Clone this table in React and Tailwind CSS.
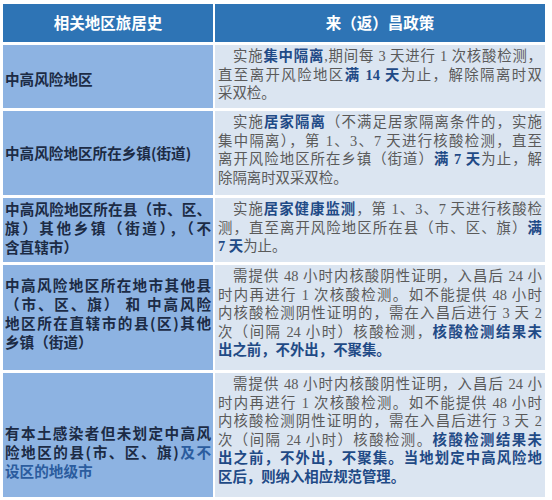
import React from 'react'

const Em = ({ children }) => <b className="font-bold text-[#1f4a86]">{children}</b>

// one printed line of a cell; every line but the last is stretched to the full width
const Line = ({ children, last, indent }) => (
  <div className={`whitespace-nowrap text-justify ${last ? '' : '[text-align-last:justify]'} ${indent ? 'pl-[15px]' : ''}`}>
    {children}
  </div>
)

const LeftCell = ({ pad, children }) => (
  <div className={`w-[210px] shrink-0 bg-[#8db3e2] px-[2px] ${pad} text-[14.6px] leading-[19px] font-bold text-[#1c2b45] font-['Noto_Sans_CJK_SC',sans-serif]`}>
    {children}
  </div>
)

const RightCell = ({ children }) => (
  <div className="w-[330px] shrink-0 bg-[#dbe5f1] pl-[3px] pr-[3px] pt-[2px] text-[14.4px] leading-[18.5px] text-[#5a5a5a] font-['Liberation_Serif','Noto_Sans_CJK_SC',serif]">
    {children}
  </div>
)

const Row = ({ h, children }) => <div className={`flex gap-[2px] ${h}`}>{children}</div>

const App = () => {
  return (
    <div className="w-[552px] h-[500px] bg-white pl-[3px] pt-[4px]">
      <div className="flex flex-col gap-[3px]">
        {/* Header */}
        <Row h="h-[38px]">
          <div className="w-[210px] shrink-0 bg-[#2e74b5] flex items-center justify-center text-white font-bold text-[15.5px] font-['Noto_Sans_CJK_SC',sans-serif]">
            相关地区旅居史
          </div>
          <div className="w-[330px] shrink-0 bg-[#2e74b5] flex items-center justify-center text-white font-bold text-[15.5px] font-['Noto_Sans_CJK_SC',sans-serif]">
            来（返）昌政策
          </div>
        </Row>

        <Row h="h-[63px]">
          <LeftCell pad="pt-[24px]">
            <Line last>中高风险地区</Line>
          </LeftCell>
          <RightCell>
            <Line indent>实施<Em>集中隔离</Em>,期间每 3 天进行 1 次核酸检测，</Line>
            <Line>直至离开风险地区<Em>满 14 天</Em>为止，解除隔离时双</Line>
            <Line last>采双检。</Line>
          </RightCell>
        </Row>

        <Row h="h-[84px]">
          <LeftCell pad="pt-[32px]">
            <Line last>中高风险地区所在乡镇(街道)</Line>
          </LeftCell>
          <RightCell>
            <Line indent>实施<Em>居家隔离</Em>（不满足居家隔离条件的，实施</Line>
            <Line>集中隔离），第 1、3、7 天进行核酸检测，直至</Line>
            <Line>离开风险地区所在乡镇（街道）<Em>满 7 天</Em>为止，解</Line>
            <Line last>除隔离时双采双检。</Line>
          </RightCell>
        </Row>

        <Row h="h-[64px]">
          <LeftCell pad="pt-[1px]">
            <Line>中高风险地区所在县（市、区、</Line>
            <Line>旗）其他乡镇（街道），（不</Line>
            <Line last>含直辖市）</Line>
          </LeftCell>
          <RightCell>
            <Line indent>实施<Em>居家健康监测</Em>，第 1、3、7 天进行核酸检</Line>
            <Line>测，直至离开风险地区所在县（市、区、旗）<Em>满</Em></Line>
            <Line last><Em>7 天</Em>为止。</Line>
          </RightCell>
        </Row>

        <Row h="h-[105px]">
          <LeftCell pad="pt-[10px]">
            <Line>中高风险地区所在地市其他县</Line>
            <Line>（市、区、旗） 和 中高风险</Line>
            <Line>地区所在直辖市的县(区)其他</Line>
            <Line last>乡镇（街道）</Line>
          </LeftCell>
          <RightCell>
            <Line indent>需提供 48 小时内核酸阴性证明，入昌后 24 小</Line>
            <Line>时内再进行 1 次核酸检测。如不能提供 48 小时</Line>
            <Line>内核酸检测阴性证明的，需在入昌后进行 3 天 2</Line>
            <Line>次（间隔 24 小时）核酸检测，<Em>核酸检测结果未</Em></Line>
            <Line last><Em>出之前，不外出，不聚集。</Em></Line>
          </RightCell>
        </Row>

        <Row h="h-[124px]">
          <LeftCell pad="pt-[50px]">
            <Line>有本土感染者但未划定中高风</Line>
            <Line>险地区的县(市、区、旗)<span className="text-[#2b5c9e]">及不</span></Line>
            <Line last><span className="text-[#2b5c9e]">设区的地级市</span></Line>
          </LeftCell>
          <RightCell>
            <Line indent>需提供 48 小时内核酸阴性证明，入昌后 24 小</Line>
            <Line>时内再进行 1 次核酸检测。如不能提供 48 小时</Line>
            <Line>内核酸检测阴性证明的，需在入昌后进行 3 天 2</Line>
            <Line>次（间隔 24 小时）核酸检测。<Em>核酸检测结果未</Em></Line>
            <Line><Em>出之前，不外出，不聚集。当地划定中高风险地</Em></Line>
            <Line last><Em>区后，则纳入相应规范管理。</Em></Line>
          </RightCell>
        </Row>
      </div>
    </div>
  )
}

export default App
